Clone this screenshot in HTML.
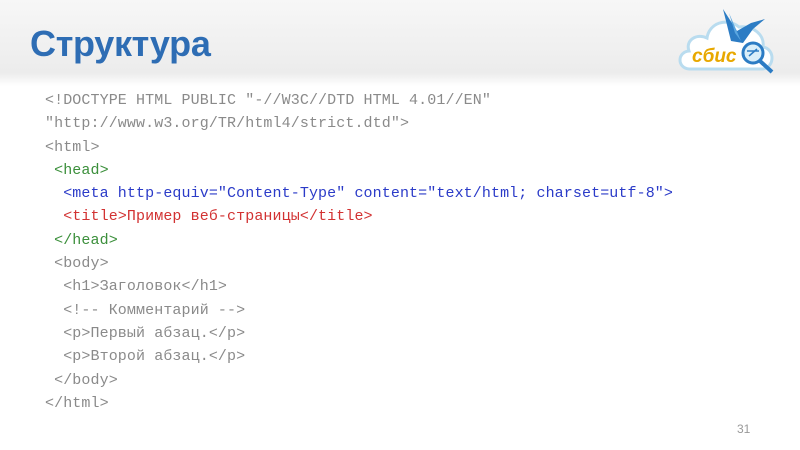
<!DOCTYPE html>
<html><head><meta charset="utf-8"><style>
body{margin:0;width:800px;height:450px;position:relative;background:#fff;overflow:hidden;font-family:"Liberation Sans",sans-serif}
.hdr{position:absolute;left:0;top:0;width:800px;height:86px;background:linear-gradient(#f7f7f7,#ececec 85%,#fff)}
h1{position:absolute;left:30px;top:23px;margin:0;font-size:36px;font-weight:bold;color:#2e6db4;letter-spacing:-0.3px}
pre{position:absolute;left:45px;top:89px;margin:0;font-family:"Liberation Mono",monospace;font-size:15px;line-height:23.3px;color:#8a8a8a;letter-spacing:0.1px}
.g{color:#3b8f3b}.b{color:#2b3bc8}.r{color:#d23232}
.pn{position:absolute;left:737px;top:422px;font-size:12px;color:#999}
</style></head><body>
<div class="hdr"></div>
<h1>Структура</h1>
<svg style="position:absolute;left:675px;top:5px" width="115" height="75" viewBox="0 0 115 75">
<path d="M14 64 C2 63 2 47 14 46 C10 35 22 28 32 33 C34 18 52 12 64 22 C78 20 90 30 88 42 C100 44 100 62 88 64 Z" fill="#fff" stroke="#b9dcef" stroke-width="3"/>
<path d="M48 4 L62 26 L76 18 L90 14 L78 24 L68 38 L56 36 Z" fill="#2c7cc4"/>
<path d="M54 8 L60 28 L66 36 Z" fill="#5aa6e0"/>
<text x="17" y="57" font-family="Liberation Sans" font-style="italic" font-weight="bold" font-size="19" fill="#e8a800">сбис</text>
<circle cx="78" cy="48" r="10" fill="#d9eef9" stroke="#2c7cc4" stroke-width="3"/>
<path d="M72 46 L84 46 M74 51 L82 44" stroke="#2c7cc4" stroke-width="1.5"/>
<line x1="85" y1="56" x2="97" y2="67" stroke="#2c7cc4" stroke-width="4"/>
</svg>
<pre>&lt;!DOCTYPE HTML PUBLIC "-//W3C//DTD HTML 4.01//EN"
"http://www.w3.org/TR/html4/strict.dtd"&gt;
&lt;html&gt;
<span class="g"> &lt;head&gt;</span>
<span class="b">  &lt;meta http-equiv="Content-Type" content="text/html; charset=utf-8"&gt;</span>
<span class="r">  &lt;title&gt;Пример веб-страницы&lt;/title&gt;</span>
<span class="g"> &lt;/head&gt;</span>
 &lt;body&gt;
  &lt;h1&gt;Заголовок&lt;/h1&gt;
  &lt;!-- Комментарий --&gt;
  &lt;p&gt;Первый абзац.&lt;/p&gt;
  &lt;p&gt;Второй абзац.&lt;/p&gt;
 &lt;/body&gt;
&lt;/html&gt;</pre>
<div class="pn">31</div>
</body></html>
